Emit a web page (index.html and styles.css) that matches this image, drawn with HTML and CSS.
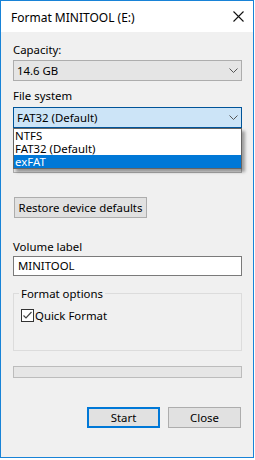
FILE: index.html
```html
<!DOCTYPE html>
<html>
<head>
<meta charset="utf-8">
<link rel="stylesheet" href="styles.css">
</head>
<body>
<div class="window">
  <div class="titlebar">
    <span class="title">Format MINITOOL (E:)</span>
    <svg class="close" width="11" height="11" viewBox="0 0 11 11"><path d="M0.5 0.5L10.5 10.5M10.5 0.5L0.5 10.5" stroke="#111" stroke-width="1.1" fill="none"/></svg>
  </div>
  <div class="content">
    <div class="label lbl-capacity">Capacity:</div>
    <div class="combo c-capacity"><span>14.6 GB</span><svg class="chev" width="9" height="5" viewBox="0 0 9 5"><path d="M0.5 0.5L4.5 4.5L8.5 0.5" stroke="#555" fill="none"/></svg></div>
    <div class="label lbl-fs">File system</div>
    <div class="fs-wrap">
      <div class="combo focus"><span>FAT32 (Default)</span><svg class="chev" width="9" height="5" viewBox="0 0 9 5"><path d="M0.5 0.5L4.5 4.5L8.5 0.5" stroke="#555" fill="none"/></svg></div>
      <ul class="dropdown">
        <li>NTFS</li>
        <li>FAT32 (Default)</li>
        <li class="sel">exFAT</li>
      </ul>
    </div>
    <div class="label lbl-alloc covered">Allocation unit size</div>
    <div class="combo c-alloc"><span class="covered">32 kilobytes</span><svg class="chev" width="9" height="5" viewBox="0 0 9 5"><path d="M0.5 0.5L4.5 4.5L8.5 0.5" stroke="#555" fill="none"/></svg></div>
    <button class="btn restore">Restore device defaults</button>
    <div class="label lbl-vol">Volume label</div>
    <div class="input">MINITOOL</div>
    <fieldset class="group">
      <legend>Format options</legend>
      <div class="check-row">
        <svg class="checkbox" width="13" height="13" viewBox="0 0 13 13"><rect x="0.5" y="0.5" width="12" height="12" fill="#fff" stroke="#333"/><path d="M2.5 6.5L5 9L10.5 3" stroke="#444" stroke-width="1.2" fill="none"/></svg>
        <span class="check-text">Quick Format</span>
      </div>
    </fieldset>
    <div class="progress"></div>
    <div class="actions">
      <button class="btn start">Start</button>
      <button class="btn">Close</button>
    </div>
  </div>
</div>
</body>
</html>
```
FILE: styles.css
```css
html, body {
  margin: 0;
  padding: 0;
  background: #ffffff;
}
body {
  font-family: "Noto Sans", "Open Sans", sans-serif;
  font-size: 11.4px;
  color: #000;
}
.window {
  box-sizing: border-box;
  width: 254px;
  height: 458px;
  border: 1px solid #1883d7;
  background: #f0f0f0;
}
.titlebar {
  height: 31px;
  background: #ffffff;
  display: flex;
  align-items: center;
  justify-content: space-between;
  padding: 0 9px 0 10px;
}
.title {
  font-size: 12px;
  line-height: 15px;
  padding-top: 1px;
}
.close {
  display: block;
}
.content {
  padding: 10px 11px 0 12px;
}
.label {
  line-height: 15px;
}
.lbl-fs { margin-top: 7px; }
.lbl-alloc { margin-top: 6px; }
.lbl-vol { margin-top: 21px; }
.covered { visibility: hidden; }
.combo {
  box-sizing: border-box;
  height: 21px;
  border: 1px solid #adadad;
  background: #e5e5e5;
  display: flex;
  align-items: center;
  justify-content: space-between;
  padding: 0 3px 0 3px;
  line-height: 15px;
  margin-top: 3px;
}
.combo.focus {
  background: #cce4f7;
  border-color: #005499;
  margin-top: 0;
}
.chev { display: block; }
.fs-wrap {
  position: relative;
  margin-top: 4px;
}
.dropdown {
  position: absolute;
  top: 100%;
  left: 0;
  width: 229px;
  box-sizing: border-box;
  margin: 0;
  padding: 0;
  list-style: none;
  background: #fff;
  border: 1px solid #646464;
  box-shadow: 3px 3px 3px rgba(0, 0, 0, 0.35);
  z-index: 2;
}
.dropdown li {
  height: 13px;
  line-height: 13px;
  padding-left: 1px;
}
.dropdown li.sel {
  background: #0078d7;
  color: #fff;
}
.btn {
  box-sizing: border-box;
  height: 21px;
  border: 1px solid #adadad;
  background: #e1e1e1;
  font-family: inherit;
  font-size: inherit;
  color: #000;
  padding: 0;
  line-height: 15px;
  display: block;
}
.restore {
  width: 133px;
  margin: 24px 0 0 1px;
}
.input {
  box-sizing: border-box;
  height: 20px;
  margin-top: 2px;
  border: 1px solid #7a7a7a;
  background: #fff;
  padding-left: 4px;
  line-height: 18px;
}
.group {
  margin: 10px 0 0 0;
  padding: 8px 0 28px 7px;
  border: 1px solid #dcdcdc;
  min-width: 0;
}
.group legend {
  padding: 0 2px;
  margin-left: -2px;
  line-height: 15px;
}
.check-row {
  display: flex;
  align-items: center;
  height: 13px;
}
.checkbox { display: block; }
.check-text {
  margin-left: 1px;
  line-height: 15px;
}
.progress {
  box-sizing: border-box;
  height: 12px;
  margin-top: 15px;
  border: 1px solid #bcbcbc;
  background: #e6e6e6;
}
.actions {
  display: flex;
  justify-content: flex-end;
  gap: 8px;
  margin-top: 29px;
  padding-right: 1px;
}
.actions .btn {
  width: 73px;
}
.btn.start {
  border: 2px solid #0078d7;
}
```
